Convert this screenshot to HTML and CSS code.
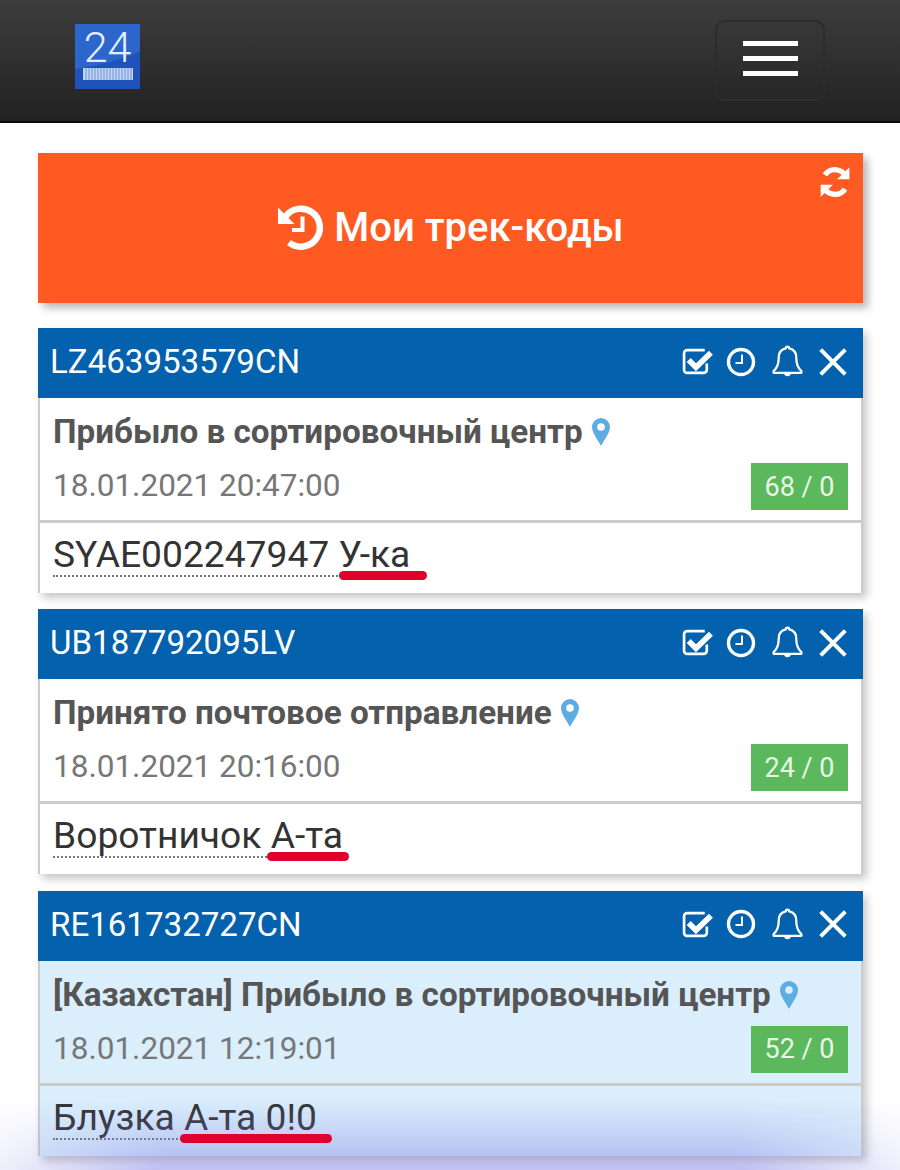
FILE: index.html
```html
<!DOCTYPE html>
<html lang="ru">
<head>
<meta charset="utf-8">
<title>Мои трек-коды</title>
<link rel="stylesheet" href="styles.css">
</head>
<body>
<svg class="sprite" width="0" height="0" aria-hidden="true">
  <symbol id="i-check" viewBox="0 0 30 28">
    <path d="M24 16v6a3 3 0 0 1-3 3H5a3 3 0 0 1-3-3V6a3 3 0 0 1 3-3h17" fill="none" stroke="currentColor" stroke-width="2.6"/>
    <path d="M6.500 12.500l7 7L28 5.500" fill="none" stroke="currentColor" stroke-width="5.500"/>
  </symbol>
  <symbol id="i-clock" viewBox="0 0 30 30">
    <circle cx="15" cy="15" r="12.500" fill="none" stroke="currentColor" stroke-width="3.400"/>
    <path d="M16 7.500v8.500H9.500" fill="none" stroke="currentColor" stroke-width="2"/>
  </symbol>
  <symbol id="i-bell" viewBox="0 0 32 32">
    <path d="M16 1.500c1 0 1.700.7 1.700 1.800 4.600 1 6.800 4.500 6.800 9 0 6.500 1.200 9.700 5 13v1.700h-27v-1.700c3.800-3.300 5-6.500 5-13 0-4.500 2.200-8 6.800-9 0-1.100.7-1.800 1.700-1.800z" fill="none" stroke="currentColor" stroke-width="2.200" stroke-linejoin="round"/>
    <path d="M12.500 27.500a3.600 3.600 0 0 0 7 0z" fill="currentColor"/>
  </symbol>
  <symbol id="i-close" viewBox="0 0 28 28">
    <path d="M2.500 2.500l23 23M25.500 2.500l-23 23" fill="none" stroke="currentColor" stroke-width="3.800"/>
  </symbol>
  <symbol id="i-pin" viewBox="0 0 20 30">
    <path d="M10 1a9 9 0 0 0-9 9c0 6 6 13 9 19 3-6 9-13 9-19a9 9 0 0 0-9-9zm0 5.200a3.800 3.800 0 1 1 0 7.600 3.800 3.800 0 0 1 0-7.600z" fill="currentColor" fill-rule="evenodd"/>
  </symbol>
</svg>

<header class="navbar">
  <svg class="logo" viewBox="0 0 65 65" aria-label="24">
    <rect width="65" height="65" fill="#2c66cc"/>
    <path d="M0 65V45C20 42 45 37 65 27v38z" fill="#1f52ba"/>
    <text class="logo-num" x="32.500" y="38" text-anchor="middle">24</text>
    <path d="M8 44h50v12H8z" fill="#c3d4f2"/>
    <path d="M11 44v12M14 44v12M17 44v12M20 44v12M23 44v12M26 44v12M29 44v12M32 44v12M35 44v12M38 44v12M41 44v12M44 44v12M47 44v12M50 44v12M53 44v12M56 44v12" stroke="#6f92d8" stroke-width="1"/>
  </svg>
  <button class="toggle" type="button" aria-label="Меню">
    <span class="bar"></span><span class="bar"></span><span class="bar"></span>
  </button>
</header>

<main class="content">
  <section class="hero">
    <svg class="refresh" viewBox="0 0 32 32" aria-hidden="true">
      <path d="M27 12.500A11.500 11.500 0 0 0 6.500 9.500" fill="none" stroke="#fff" stroke-width="5"/>
      <path d="M29.500 2v11.500H18z" fill="#fff"/>
      <path d="M5 19.500a11.500 11.500 0 0 0 20.500 3" fill="none" stroke="#fff" stroke-width="5"/>
      <path d="M2.500 30V18.500H14z" fill="#fff"/>
    </svg>
    <h1 class="hero-title">
      <svg class="history" viewBox="0 0 46 46" aria-hidden="true">
        <path d="M8.500 12.500A19 19 0 1 1 12 38.500" fill="none" stroke="#fff" stroke-width="6.500"/>
        <path d="M1 3.500V20h16.500z" fill="#fff"/>
        <path d="M25.500 12.500V26H15" fill="none" stroke="#fff" stroke-width="4"/>
      </svg>
      Мои трек-коды
    </h1>
  </section>

  <article class="card">
    <div class="card-head">
      <span class="code">LZ463953579CN</span>
      <span class="tools">
        <svg class="tool t-check"><use href="#i-check"/></svg>
        <svg class="tool t-clock"><use href="#i-clock"/></svg>
        <svg class="tool t-bell"><use href="#i-bell"/></svg>
        <svg class="tool t-close"><use href="#i-close"/></svg>
      </span>
    </div>
    <div class="card-status">
      <div class="status">Прибыло в сортировочный центр <svg class="pin"><use href="#i-pin"/></svg></div>
      <div class="meta">
        <span class="date">18.01.2021 20:47:00</span>
        <span class="badge">68 / 0</span>
      </div>
    </div>
    <div class="card-note">
      <span class="note">SYAE002247947 <span class="mark mark-1">У-ка</span></span>
    </div>
  </article>

  <article class="card">
    <div class="card-head">
      <span class="code">UB187792095LV</span>
      <span class="tools">
        <svg class="tool t-check"><use href="#i-check"/></svg>
        <svg class="tool t-clock"><use href="#i-clock"/></svg>
        <svg class="tool t-bell"><use href="#i-bell"/></svg>
        <svg class="tool t-close"><use href="#i-close"/></svg>
      </span>
    </div>
    <div class="card-status">
      <div class="status">Принято почтовое отправление <svg class="pin"><use href="#i-pin"/></svg></div>
      <div class="meta">
        <span class="date">18.01.2021 20:16:00</span>
        <span class="badge">24 / 0</span>
      </div>
    </div>
    <div class="card-note">
      <span class="note">Воротничок <span class="mark mark-2">А-та</span></span>
    </div>
  </article>

  <article class="card card-new">
    <div class="card-head">
      <span class="code">RE161732727CN</span>
      <span class="tools">
        <svg class="tool t-check"><use href="#i-check"/></svg>
        <svg class="tool t-clock"><use href="#i-clock"/></svg>
        <svg class="tool t-bell"><use href="#i-bell"/></svg>
        <svg class="tool t-close"><use href="#i-close"/></svg>
      </span>
    </div>
    <div class="card-status">
      <div class="status">[Казахстан] Прибыло в сортировочный центр <svg class="pin"><use href="#i-pin"/></svg></div>
      <div class="meta">
        <span class="date">18.01.2021 12:19:01</span>
        <span class="badge">52 / 0</span>
      </div>
    </div>
    <div class="card-note">
      <span class="note">Блузка <span class="mark mark-3">А-та 0!0</span></span>
    </div>
  </article>
</main>
<div class="screen-glow"></div>
</body>
</html>
```
FILE: styles.css
```css
* { box-sizing: border-box; }
html, body { margin: 0; padding: 0; }
body {
  width: 900px;
  height: 1170px;
  overflow: hidden;
  background: #fff;
  font-family: Roboto, "Liberation Sans", sans-serif;
  position: relative;
}
.sprite { position: absolute; }

.navbar {
  height: 123px;
  background: linear-gradient(#3d3d3d, #222);
  border-bottom: 2px solid #0a0a0a;
  display: flex;
  justify-content: space-between;
  align-items: flex-start;
  padding: 24px 75px 0;
}
.logo { width: 65px; height: 65px; display: block; overflow: visible; }
.logo-num { font-family: Roboto, sans-serif; font-weight: 300; font-size: 43px; fill: #e4eefd; }
.toggle {
  width: 110px;
  height: 81px;
  margin: -4px 0 0;
  border: 2px solid #2c2c2c;
  border-bottom-color: #303030;
  border-radius: 10px;
  background: transparent;
  padding: 0 0 4px;
  display: flex;
  flex-direction: column;
  align-items: center;
  justify-content: center;
  gap: 10px;
}
.bar { display: block; width: 55px; height: 5px; background: #fff; }

.content {
  padding: 30px 37px 0 38px;
  display: flex;
  flex-direction: column;
}
.hero {
  height: 150px;
  background: #ff5a22;
  box-shadow: 5px 5px 8px rgba(0,0,0,.28);
  position: relative;
  display: flex;
  align-items: center;
  justify-content: center;
  margin-bottom: 25px;
}
.refresh { position: absolute; top: 12px; right: 11px; width: 34px; height: 34px; }
.hero-title {
  margin: 0;
  padding-bottom: 2px;
  color: #fff;
  font-size: 40px;
  font-weight: 500;
  display: flex;
  align-items: center;
  gap: 11px;
}
.history { width: 46px; height: 46px; }

.card {
  height: 265px;
  margin-bottom: 16.400px;
  background: #fff;
  box-shadow: 4px 5px 8px rgba(0,0,0,.22);
  border-left: 2px solid #ccc;
  border-right: 2px solid #ccc;
  display: flex;
  flex-direction: column;
}
.card-new { background: #daeefc; }
.card-head {
  height: 70px;
  margin: 0 -2px;
  padding: 0 15px 3px 12px;
  background: #0361ad;
  color: #fff;
  display: flex;
  align-items: center;
  justify-content: space-between;
}
.code { font-size: 33.100px; }
.tools { display: flex; align-items: center; }
.tool { display: block; color: #fff; }
.t-check { width: 31px; height: 29px; margin-right: 13px; }
.t-clock { width: 30px; height: 30px; margin-right: 15px; }
.t-bell { width: 33px; height: 33px; margin-right: 14px; }
.t-close { width: 30px; height: 30px; }

.card-status {
  height: 125px;
  padding: 14px 13px 0;
  border-bottom: 3px solid #ccc;
}
.status {
  font-size: 33.250px;
  font-weight: 700;
  color: #555;
  line-height: 40px;
  display: flex;
  align-items: center;
  gap: 8px;
  white-space: nowrap;
}
.pin { width: 20px; height: 30px; color: #5dade2; }
.meta {
  display: flex;
  justify-content: space-between;
  align-items: center;
  margin-top: 11px;
}
.date { font-size: 31.500px; color: #777; position: relative; top: -1px; }
.badge {
  width: 97px;
  height: 47px;
  background: #5cb85c;
  color: #e9f7e6;
  font-size: 27px;
  display: flex;
  align-items: center;
  justify-content: center;
}
.card-note { flex: 1; padding: 11px 13px 0; }
.note {
  display: inline-block;
  font-size: 37.200px;
  line-height: 41px;
  color: #333;
  border-bottom: 2px dotted #777;
}
.mark { position: relative; }
.mark::after {
  content: "";
  position: absolute;
  z-index: 2;
  left: 0;
  bottom: -4px;
  height: 9px;
  border-radius: 5px;
  background: #e0002b;
}
.mark-1::after { width: 88px; left: 1px; }
.mark-2::after { width: 82px; left: -4px; }
.mark-3::after { width: 152px; left: -4px; }

.screen-glow {
  position: absolute;
  z-index: 1;
  left: 0;
  right: 0;
  bottom: 0;
  height: 70px;
  background: linear-gradient(rgba(130,130,230,0), rgba(130,130,230,.5));
  -webkit-mask-image: linear-gradient(90deg, rgba(0,0,0,.25), #000 18%, #000 82%, rgba(0,0,0,.25));
  mask-image: linear-gradient(90deg, rgba(0,0,0,.25), #000 18%, #000 82%, rgba(0,0,0,.25));
  pointer-events: none;
}
```
